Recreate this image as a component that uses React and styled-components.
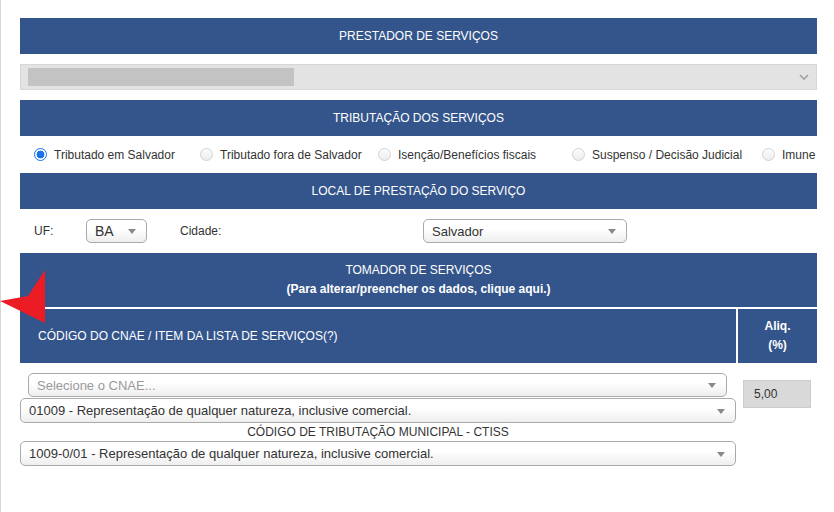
import React from 'react';
import styled, { createGlobalStyle } from 'styled-components';

const GlobalStyle = createGlobalStyle`
  html, body {
    margin: 0;
    padding: 0;
    background: #ffffff;
  }
  body {
    font-family: "Liberation Sans", Arial, sans-serif;
    font-size: 12px;
    color: #333333;
  }
`;

const regimes = [
  { label: 'Tributado em Salvador', checked: true },
  { label: 'Tributado fora de Salvador' },
  { label: 'Isenção/Benefícios fiscais' },
  { label: 'Suspenso / Decisão Judicial' },
  { label: 'Imune' },
];

const App = () => {
  return (
    <>
      <GlobalStyle />
      <Page>
        <Pointer viewBox="0 0 46 54" aria-hidden="true">
          <path d="M0 31 L28 26 L45 0 L45 53 Z" fill="#ec1c24" />
        </Pointer>

        <SectionBar>PRESTADOR DE SERVIÇOS</SectionBar>
        <PrestadorSelect>
          <Redacted />
          <svg width="10" height="6" viewBox="0 0 10 6">
            <path d="M1 1 L5 5 L9 1" fill="none" stroke="#a0a0a0" strokeWidth="1.6" />
          </svg>
        </PrestadorSelect>

        <SectionBar>TRIBUTAÇÃO DOS SERVIÇOS</SectionBar>
        <RadioRow>
          {regimes.map((r) => (
            <RadioOption key={r.label}>
              <RadioDot $checked={r.checked} />
              {r.label}
            </RadioOption>
          ))}
        </RadioRow>

        <SectionBar>LOCAL DE PRESTAÇÃO DO SERVIÇO</SectionBar>
        <LocalRow>
          <FieldLabel $width={52}>UF:</FieldLabel>
          <DropDown $width={61} $size={14}>
            BA
            <Caret />
          </DropDown>
          <FieldLabel $width={243} $gap={33}>
            Cidade:
          </FieldLabel>
          <DropDown $width={204} $size={13}>
            Salvador
            <Caret />
          </DropDown>
        </LocalRow>

        <TomadorTable>
          <TomadorHead>
            TOMADOR DE SERVIÇOS
            <strong>(Para alterar/preencher os dados, clique aqui.)</strong>
          </TomadorHead>
          <CnaeHead>CÓDIGO DO CNAE / ITEM DA LISTA DE SERVIÇOS(?)</CnaeHead>
          <AliqHead>
            Aliq.
            <br />
            (%)
          </AliqHead>
        </TomadorTable>

        <CnaeArea>
          <CnaeColumn>
            <DropDown $inset $placeholder $size={13}>
              Selecione o CNAE...
              <Caret />
            </DropDown>
            <DropDown $tall $size={13}>
              01009 - Representação de qualquer natureza, inclusive comercial.
              <Caret />
            </DropDown>
            <CtissLabel>CÓDIGO DE TRIBUTAÇÃO MUNICIPAL - CTISS</CtissLabel>
            <DropDown $tall $size={13}>
              1009-0/01 - Representação de qualquer natureza, inclusive comercial.
              <Caret />
            </DropDown>
          </CnaeColumn>
          <AliqBox>5,00</AliqBox>
        </CnaeArea>
      </Page>
    </>
  );
};

const Page = styled.div`
  position: relative;
  min-height: 512px;
  box-sizing: border-box;
  border-left: 1px solid #d6d6d6;
  padding: 18px 17px 0 19px;
`;

const Pointer = styled.svg`
  position: absolute;
  left: -1px;
  top: 270px;
  width: 46px;
  height: 54px;
`;

const SectionBar = styled.div`
  height: 36px;
  display: flex;
  align-items: center;
  justify-content: center;
  background-color: #34558b;
  color: #ffffff;
  font-size: 12px;
`;

const PrestadorSelect = styled.div`
  height: 26px;
  box-sizing: border-box;
  margin: 10px 0;
  padding: 0 7px 0 7px;
  display: flex;
  align-items: center;
  justify-content: space-between;
  background-color: #e3e3e3;
  border: 1px solid #d6d6d6;
`;

const Redacted = styled.div`
  width: 266px;
  height: 18px;
  background-color: #c3c3c3;
`;

const RadioRow = styled.div`
  height: 37px;
  display: grid;
  grid-template-columns: 166px 178px 194px 190px auto;
  align-items: center;
  padding-left: 14px;
`;

const RadioOption = styled.label`
  display: flex;
  align-items: center;
  gap: 7px;
  font-size: 12px;
  color: #333333;
  white-space: nowrap;
`;

const RadioDot = styled.span`
  width: 13px;
  height: 13px;
  box-sizing: border-box;
  border-radius: 50%;
  flex-shrink: 0;
  border: 1px solid ${(p) => (p.$checked ? '#1a73e8' : '#d2d2d2')};
  background: ${(p) =>
    p.$checked
      ? 'radial-gradient(circle, #1a73e8 0 3.6px, #ffffff 4.2px)'
      : 'linear-gradient(#fdfdfd, #ececec)'};
`;

const LocalRow = styled.div`
  height: 44px;
  display: flex;
  align-items: center;
  padding-left: 14px;
`;

const FieldLabel = styled.span`
  width: ${(p) => p.$width}px;
  margin-left: ${(p) => p.$gap || 0}px;
  font-size: 12px;
  color: #333333;
`;

const DropDown = styled.div`
  position: relative;
  box-sizing: border-box;
  width: ${(p) => (p.$width ? `${p.$width}px` : 'auto')};
  height: ${(p) => (p.$tall ? 25 : 24)}px;
  margin: ${(p) => (p.$inset ? '0 9px 1px 8px' : '0')};
  padding-left: 8px;
  display: flex;
  align-items: center;
  font-size: ${(p) => p.$size || 12}px;
  color: ${(p) => (p.$placeholder ? '#9a9a9a' : '#333333')};
  background: linear-gradient(#ffffff 0%, #ffffff 40%, #eeeeee 100%);
  border: 1px solid #aaaaaa;
  border-radius: 5px;
  white-space: nowrap;
`;

const Caret = styled.span`
  position: absolute;
  right: 10px;
  top: 50%;
  margin-top: -2px;
  width: 0;
  height: 0;
  border-left: 4px solid transparent;
  border-right: 4px solid transparent;
  border-top: 5px solid #888888;
`;

const TomadorTable = styled.div`
  display: grid;
  grid-template-columns: 1fr 79px;
  grid-template-rows: 54px 54px;
  gap: 2px;
  background-color: #ffffff;
  color: #ffffff;
  font-size: 12px;
  line-height: 19px;
`;

const TomadorHead = styled.div`
  grid-column: 1 / span 2;
  background-color: #34558b;
  display: flex;
  flex-direction: column;
  align-items: center;
  justify-content: center;

  strong {
    font-weight: bold;
  }
`;

const CnaeHead = styled.div`
  background-color: #34558b;
  display: flex;
  align-items: center;
  padding-left: 18px;
`;

const AliqHead = styled.div`
  background-color: #34558b;
  display: flex;
  align-items: center;
  justify-content: center;
  text-align: center;
  font-weight: bold;
`;

const CnaeArea = styled.div`
  display: flex;
  align-items: flex-start;
  margin-top: 10px;
`;

const CnaeColumn = styled.div`
  width: 716px;
  display: flex;
  flex-direction: column;
`;

const CtissLabel = styled.div`
  height: 18px;
  line-height: 18px;
  text-align: center;
  font-size: 12px;
  color: #333333;
`;

const AliqBox = styled.div`
  width: 68px;
  height: 28px;
  box-sizing: border-box;
  margin: 7px 0 0 7px;
  padding-left: 10px;
  display: flex;
  align-items: center;
  font-size: 12px;
  color: #333333;
  background-color: #d9d9d9;
  border: 1px solid #cccccc;
`;

export default App;
